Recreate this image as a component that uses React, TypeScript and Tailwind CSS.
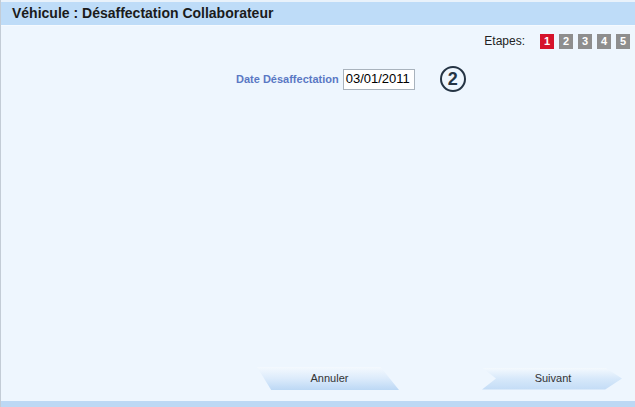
import React from "react";

const steps = [1, 2, 3, 4, 5];

function StepBox({ n, active }: { n: number; active: boolean }) {
  return (
    <div
      className={`w-[14px] h-[15px] flex items-center justify-center text-white text-[11px] font-bold leading-none ${
        active ? "bg-[#d5132b]" : "bg-[#8e8e8e]"
      }`}
    >
      {n}
    </div>
  );
}

function Annuler() {
  return (
    <div className="relative w-[142px] h-[23px]">
      <div className="absolute inset-0 bg-gradient-to-b from-[#f4f9fe] via-[#dcebfb] to-[#bcd8f5] [clip-path:polygon(0%_0%,87%_0%,100%_100%,10%_100%)]" />
      <span className="relative flex h-full items-center justify-center pl-[3px] text-[11px] text-[#333]">Annuler</span>
    </div>
  );
}

function Suivant() {
  return (
    <div className="relative w-[140px] h-[22px]">
      <div className="absolute inset-0 bg-gradient-to-b from-[#f4f9fe] via-[#d6e8fa] to-[#c3dcf6] [clip-path:polygon(0%_0%,88%_0%,100%_50%,88%_100%,0%_100%,10%_50%)]" />
      <span className="relative flex h-full items-center justify-center pl-[2px] text-[11px] text-[#333]">Suivant</span>
    </div>
  );
}

export default function App() {
  return (
    <div className="w-[635px] h-[407px] flex flex-col bg-[#eef6fe] border-l border-[#c3ccd6] font-['Liberation_Sans',Arial,sans-serif] overflow-hidden">
      <div className="h-[2px] bg-[#e9f2fb]" />
      {/* header */}
      <div className="h-[24px] bg-[#bedcf8] flex items-center pl-[11px] border-b border-[#f5faff]">
        <span className="text-[14px] font-bold text-[#1b1b1b]">Véhicule : Désaffectation Collaborateur</span>
      </div>

      {/* etapes */}
      <div className="flex items-center justify-end pr-[5px] mt-[6px] gap-[5px]">
        <span className="text-[12px] text-[#222] mr-[10px]">Etapes:</span>
        {steps.map((n) => (
          <StepBox key={n} n={n} active={n === 1} />
        ))}
      </div>

      {/* date row */}
      <div className="flex items-center mt-[16px] pl-[235px]">
        <span className="text-[11px] font-bold text-[#5a78c4]">Date Désaffectation</span>
        <div className="ml-[4px] w-[72px] h-[21px] bg-white border border-[#a9b3bd] flex items-center pl-[2px] text-[13px] text-black">
          03/01/2011
        </div>
        <div className="ml-[25px] w-[26px] h-[26px] rounded-full border-[2px] border-[#253444] flex items-center justify-center text-[18px] font-bold text-[#253444] leading-none">
          2
        </div>
      </div>

      <div className="flex-1" />

      {/* buttons */}
      <div className="flex items-center pl-[256px] mb-[11px]">
        <Annuler />
        <div className="ml-[83px]">
          <Suivant />
        </div>
      </div>

      <div className="h-[6px] bg-[#bcd8f4]" />
    </div>
  );
}
